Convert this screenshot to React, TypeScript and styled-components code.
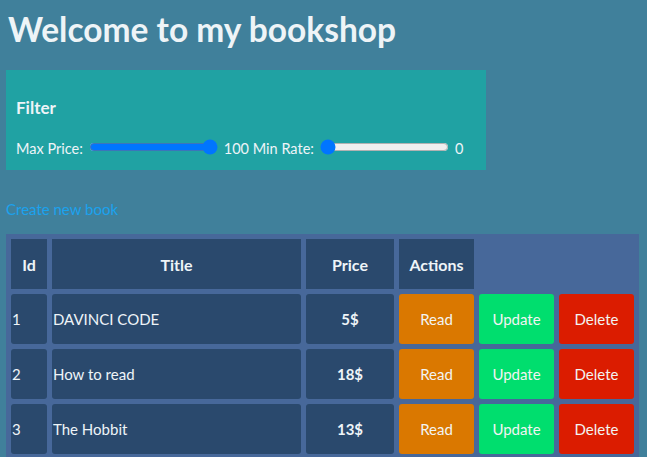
import React, { useState } from "react";
import styled, { createGlobalStyle } from "styled-components";

const GlobalStyle = createGlobalStyle`
  html, body {
    margin: 0;
    padding: 0;
    background: #40809b;
  }
  body {
    font-family: Lato, "Open Sans", sans-serif;
    font-size: 15px;
    color: #eef4f8;
  }
`;

const Page = styled.div`
  padding: 0 8px 0 6px;
`;

const Heading = styled.h1`
  margin: 10px 0 22px 2px;
  font-size: 33.5px;
  line-height: 38px;
  font-weight: 700;
  color: #eef4f7;
`;

const FilterBox = styled.section`
  width: 480px;
  box-sizing: border-box;
  padding: 10px 10px 13px;
  background: #20a2a3;
`;

const FilterTitle = styled.h3`
  margin: 17px 0 18px;
  font-size: 17px;
  line-height: 22px;
  font-weight: 700;
`;

const FilterRow = styled.div`
  display: flex;
  align-items: center;
  gap: 4px;
  height: 20px;
`;

const Label = styled.span`
  font-size: 14.5px;
  line-height: 20px;
  padding-top: 3px;
  white-space: nowrap;
`;

const Range = styled.input`
  margin: 2px;
`;

const CreateLink = styled.a`
  display: block;
  margin: 30px 0 16px;
  line-height: 18px;
  color: #1ba2ee;
  text-decoration: none;
  width: max-content;
`;

const Table = styled.table`
  border-collapse: separate;
  border-spacing: 5px;
  background: #47689a;
  table-layout: fixed;
  width: 633px;
`;

const HeadCell = styled.th`
  height: 50px;
  padding: 0;
  background: #2a496d;
  font-size: 16px;
  font-weight: 700;
  text-align: center;
  vertical-align: middle;
`;

const Cell = styled.td<{ $bold?: boolean; $center?: boolean }>`
  height: 50px;
  padding: 0 1px;
  background: #2a496d;
  border-radius: 3px;
  vertical-align: middle;
  font-weight: ${(p) => (p.$bold ? 700 : 400)};
  text-align: ${(p) => (p.$center ? "center" : "left")};
`;

const ActionCell = styled.td`
  height: 50px;
  padding: 0;
`;

const colors: Record<string, string> = {
  read: "#da7800",
  update: "#00de6e",
  delete: "#db1c00",
};

const ActionButton = styled.button<{ $kind: "read" | "update" | "delete" }>`
  display: block;
  width: 100%;
  height: 50px;
  border: none;
  border-radius: 3px;
  background: ${(p) => colors[p.$kind]};
  color: #f2f4f2;
  font-family: inherit;
  font-size: 15px;
  cursor: pointer;
`;

const books = [
  { id: 1, title: "DAVINCI CODE", price: 5 },
  { id: 2, title: "How to read", price: 18 },
  { id: 3, title: "The Hobbit", price: 13 },
];

export default function App() {
  const [maxPrice, setMaxPrice] = useState(100);
  const [minRate, setMinRate] = useState(0);
  return (
    <Page>
      <GlobalStyle />
      <Heading>Welcome to my bookshop</Heading>
      <FilterBox>
        <FilterTitle>Filter</FilterTitle>
        <FilterRow>
          <Label>Max Price:</Label>
          <Range
            type="range"
            min={0}
            max={100}
            value={maxPrice}
            onChange={(e) => setMaxPrice(Number(e.target.value))}
          />
          <Label>{maxPrice} Min Rate:</Label>
          <Range
            type="range"
            min={0}
            max={5}
            value={minRate}
            onChange={(e) => setMinRate(Number(e.target.value))}
          />
          <Label>{minRate}</Label>
        </FilterRow>
      </FilterBox>
      <CreateLink href="#">Create new book</CreateLink>
      <Table>
        <colgroup>
          <col style={{ width: 36 }} />
          <col style={{ width: 249 }} />
          <col style={{ width: 88 }} />
          <col style={{ width: 75 }} />
          <col style={{ width: 75 }} />
          <col style={{ width: 75 }} />
        </colgroup>
        <thead>
          <tr>
            <HeadCell>Id</HeadCell>
            <HeadCell>Title</HeadCell>
            <HeadCell>Price</HeadCell>
            <HeadCell>Actions</HeadCell>
          </tr>
        </thead>
        <tbody>
          {books.map((b) => (
            <tr key={b.id}>
              <Cell>{b.id}</Cell>
              <Cell>{b.title}</Cell>
              <Cell $bold $center>
                {b.price}$
              </Cell>
              <ActionCell>
                <ActionButton $kind="read">Read</ActionButton>
              </ActionCell>
              <ActionCell>
                <ActionButton $kind="update">Update</ActionButton>
              </ActionCell>
              <ActionCell>
                <ActionButton $kind="delete">Delete</ActionButton>
              </ActionCell>
            </tr>
          ))}
        </tbody>
      </Table>
    </Page>
  );
}
